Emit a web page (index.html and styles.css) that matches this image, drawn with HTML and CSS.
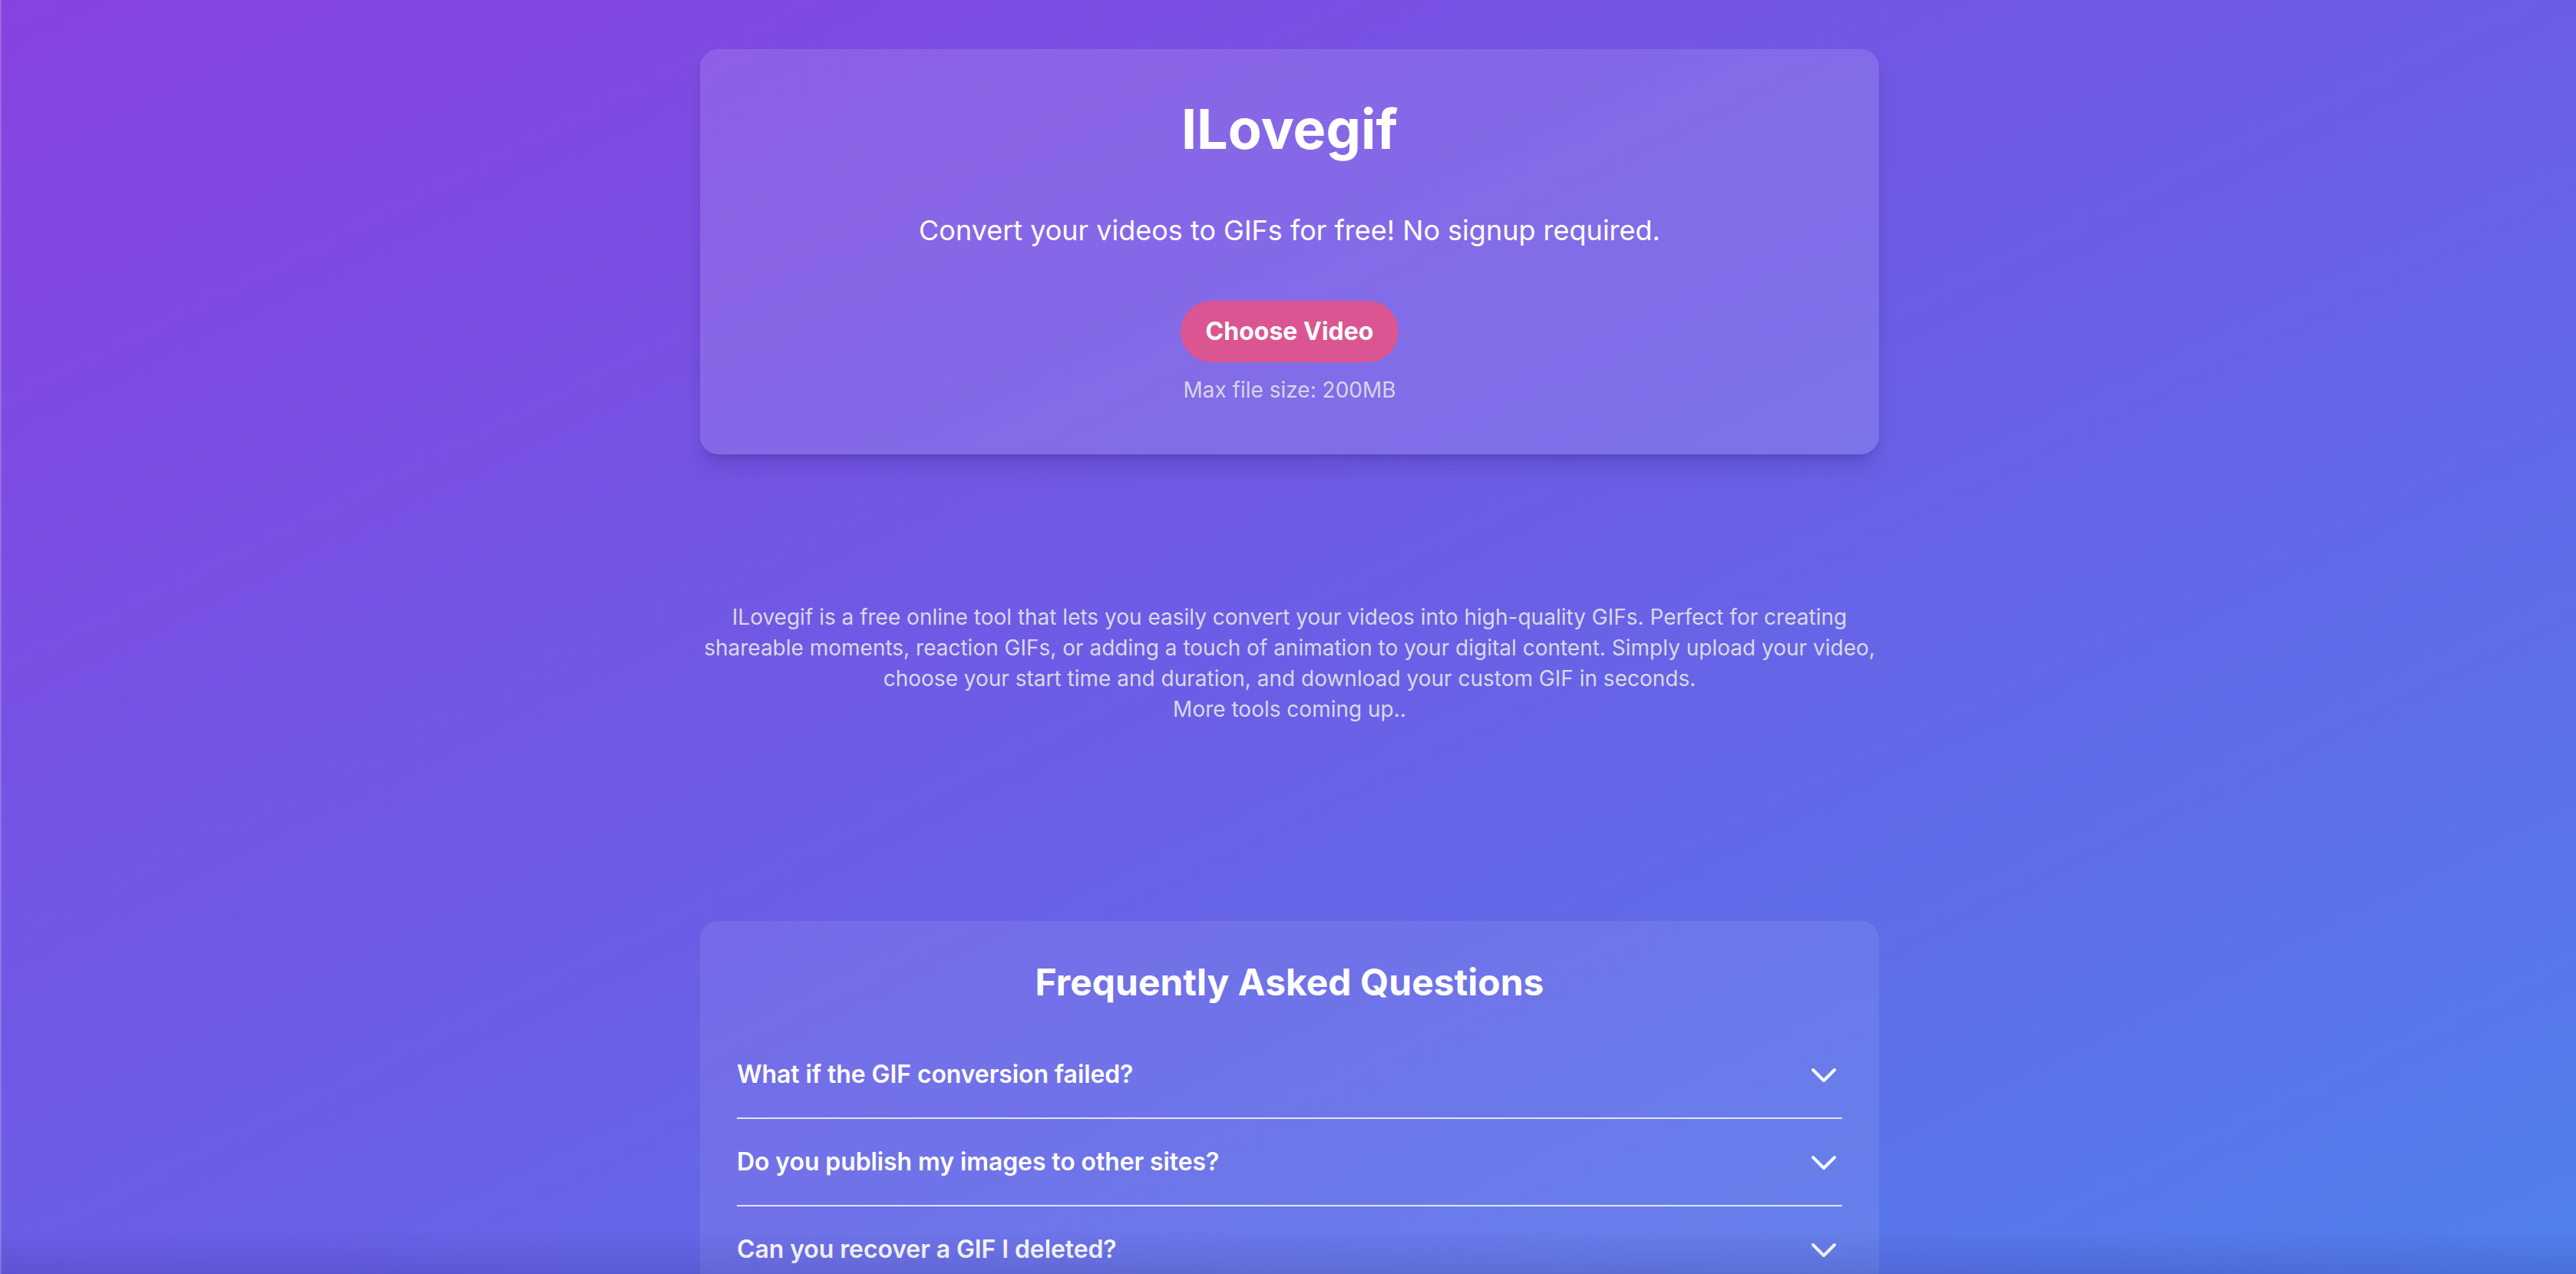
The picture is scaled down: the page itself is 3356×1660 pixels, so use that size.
FILE: index.html
```html
<!DOCTYPE html>
<html lang="en">
<head>
<meta charset="utf-8">
<title>ILovegif - Convert videos to GIFs</title>
<link rel="stylesheet" href="styles.css">
</head>
<body>
<main class="page">
  <section class="card hero">
    <h1 class="hero-title">ILovegif</h1>
    <p class="hero-tagline">Convert your videos to GIFs for free! No signup required.</p>
    <button class="btn-choose" type="button">Choose Video</button>
    <p class="hero-note">Max file size: 200MB</p>
  </section>

  <p class="about">ILovegif is a free online tool that lets you easily convert your videos into high-quality GIFs. Perfect for creating shareable moments, reaction GIFs, or adding a touch of animation to your digital content. Simply upload your video, choose your start time and duration, and download your custom GIF in seconds.<br>More tools coming up..</p>

  <section class="card faq">
    <h2 class="faq-title">Frequently Asked Questions</h2>
    <div class="faq-list">
      <div class="faq-item">
        <span class="faq-q">What if the GIF conversion failed?</span>
        <svg class="chev" viewBox="0 0 24 24" fill="none"><path d="M19 9l-7 7-7-7"/></svg>
      </div>
      <div class="faq-item">
        <span class="faq-q">Do you publish my images to other sites?</span>
        <svg class="chev" viewBox="0 0 24 24" fill="none"><path d="M19 9l-7 7-7-7"/></svg>
      </div>
      <div class="faq-item">
        <span class="faq-q">Can you recover a GIF I deleted?</span>
        <svg class="chev" viewBox="0 0 24 24" fill="none"><path d="M19 9l-7 7-7-7"/></svg>
      </div>
    </div>
  </section>
</main>
<div class="window-edge"></div>
</body>
</html>
```

FILE: styles.css
```css
html, body {
  margin: 0;
  padding: 0;
}

body {
  min-height: 100vh;
  padding-left: 4px;
  font-family: "Inter", "Noto Sans", "Liberation Sans", sans-serif;
  color: #ffffff;
  background: linear-gradient(to bottom right, #8842e0 0%, #6b5ee6 50%, #5180ec 100%) fixed;
}

.page {
  max-width: 1536px;
  margin: 0 auto;
  padding: 64px 0 128px;
}

.card {
  background: rgba(255, 255, 255, 0.12);
  border-radius: 24px;
  box-shadow: 0 20px 30px -6px rgba(30, 10, 90, 0.18), 0 8px 12px -8px rgba(30, 10, 90, 0.18);
}

.hero {
  padding: 64px;
  display: flex;
  flex-direction: column;
  align-items: center;
  text-align: center;
}

.hero-title {
  margin: 0 0 64px;
  font-size: 72px;
  line-height: 80px;
  font-weight: 700;
}

.hero-tagline {
  margin: 0 0 64px;
  font-size: 36px;
  line-height: 56px;
  font-weight: 400;
}

.btn-choose {
  height: 80px;
  padding: 0 33px;
  border: none;
  border-radius: 9999px;
  background: #da5592;
  color: #ffffff;
  font-family: inherit;
  font-size: 32px;
  line-height: 48px;
  font-weight: 700;
  cursor: pointer;
}

.hero-note {
  margin: 16px 0 0;
  font-size: 28px;
  line-height: 40px;
  color: #d5d6e6;
}

.about {
  margin: 192px 0 0;
  text-align: center;
  font-size: 28px;
  line-height: 40px;
  color: #d9d9e8;
}

.faq {
  margin-top: 256px;
  padding: 48px;
  background: rgba(255, 255, 255, 0.08);
  box-shadow: none;
}

.faq-title {
  margin: 0 0 32px;
  text-align: center;
  font-size: 48px;
  line-height: 64px;
  font-weight: 700;
}

.faq-item {
  display: flex;
  align-items: center;
  justify-content: space-between;
  padding: 32px 0;
  border-bottom: 2px solid #e3e4f2;
}

.faq-q {
  font-size: 32px;
  line-height: 48px;
  font-weight: 600;
  letter-spacing: -0.1px;
}

.chev {
  width: 48px;
  height: 48px;
  flex: none;
  stroke: #ffffff;
  stroke-width: 2;
  stroke-linecap: round;
  stroke-linejoin: round;
}

.window-edge {
  position: fixed;
  inset: 0;
  pointer-events: none;
  box-shadow: inset 2px 0 0 rgba(255, 255, 255, 0.18);
  background: linear-gradient(to bottom, rgba(30, 20, 100, 0) calc(100% - 56px), rgba(30, 20, 100, 0.14) 100%);
}
```
